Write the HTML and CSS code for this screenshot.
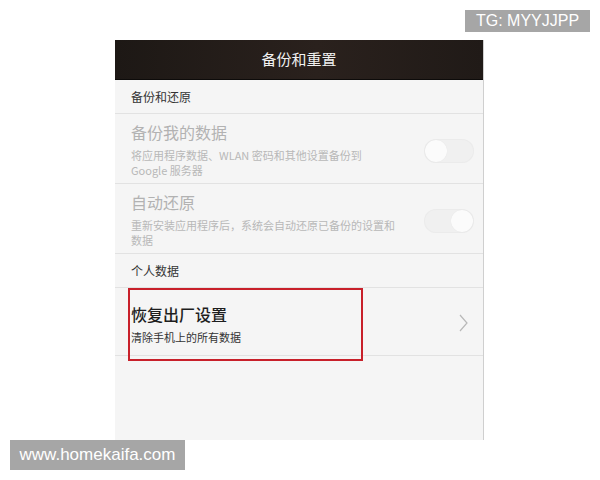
FILE: index.html
```html
<!DOCTYPE html>
<html lang="zh">
<head>
<meta charset="utf-8">
<title>备份和重置</title>
<link rel="stylesheet" href="styles.css">
</head>
<body>
<div class="screen">
  <div class="titlebar">备份和重置</div>
  <div class="content">
    <div class="section-head">备份和还原</div>
    <div class="row disabled">
      <div class="text">
        <div class="title">备份我的数据</div>
        <div class="sub">将应用程序数据、WLAN 密码和其他设置备份到<br>Google 服务器</div>
      </div>
      <div class="toggle"><span class="knob"></span></div>
    </div>
    <div class="row disabled">
      <div class="text">
        <div class="title">自动还原</div>
        <div class="sub">重新安装应用程序后，系统会自动还原已备份的设置和数据</div>
      </div>
      <div class="toggle on"><span class="knob"></span></div>
    </div>
    <div class="section-head">个人数据</div>
    <div class="row link">
      <div class="text">
        <div class="title">恢复出厂设置</div>
        <div class="sub">清除手机上的所有数据</div>
      </div>
      <svg class="chevron" width="9" height="18" viewBox="0 0 9 18"><path d="M1 1 L8 9 L1 17" fill="none" stroke="#b8b8b8" stroke-width="1.2"/></svg>
    </div>
  </div>
  <div class="highlight"></div>
</div>
<div class="wm wm-top">TG: MYYJJPP</div>
<div class="wm wm-bottom">www.homekaifa.com</div>
</body>
</html>
```
FILE: styles.css
```css
html, body {
  margin: 0;
  padding: 0;
  background: #ffffff;
}
body {
  width: 600px;
  height: 480px;
  padding-top: 40px;
  box-sizing: border-box;
  font-family: "Noto Sans CJK SC", "Noto Sans", sans-serif;
  position: relative;
  overflow: hidden;
}
.screen {
  position: relative;
  margin-left: 115px;
  width: 369px;
  height: 400px;
  background: #f5f5f5;
  border-right: 1px solid #cfcfcf;
  box-sizing: border-box;
  display: flex;
  flex-direction: column;
}
.titlebar {
  height: 40px;
  flex: none;
  background: linear-gradient(to right, #1d1815, #2a211d 55%, #201a17);
  border-bottom: 1px solid #0d0b0a;
  box-sizing: border-box;
  color: #f2f2f2;
  font-size: 15px;
  display: flex;
  align-items: center;
  justify-content: center;
  padding-bottom: 2px;
}
.content {
  flex: 1;
  display: flex;
  flex-direction: column;
}
.section-head {
  height: 34px;
  box-sizing: border-box;
  padding-left: 16px;
  display: flex;
  align-items: center;
  font-size: 12px;
  color: #333333;
  border-bottom: 1px solid #e2e2e2;
}
.row {
  display: flex;
  align-items: center;
  padding: 6px 9px 5px 16px;
  border-bottom: 1px solid #e2e2e2;
}
.row .text {
  flex: 1;
}
.row .title {
  font-size: 16px;
  line-height: 24px;
}
.row .sub {
  font-size: 11px;
  line-height: 15px;
  margin-top: 4px;
  width: 270px;
}
.row.disabled .title {
  color: #b2b2b2;
}
.row.disabled .sub {
  color: #b8b8b8;
}
.row.link {
  padding: 14px 15px 10px 16px;
}
.row.link .title {
  color: #1e1e1e;
  font-weight: 500;
}
.row.link .sub {
  color: #333333;
  margin-top: 3px;
  line-height: 16px;
}
.chevron {
  flex: none;
  margin-bottom: 2px;
}
.toggle {
  flex: none;
  width: 50px;
  height: 24px;
  border-radius: 12px;
  background: #f0f0f0;
  box-shadow: inset 0 0 0 1px #ebebeb;
  position: relative;
  margin-top: 4px;
}
.knob {
  position: absolute;
  top: 1px;
  left: 1px;
  width: 22px;
  height: 22px;
  border-radius: 50%;
  background: #fbfbfb;
  box-shadow: 0 0 1px rgba(0,0,0,0.08);
}
.toggle.on .knob {
  left: 27px;
}
.highlight {
  position: absolute;
  left: 13px;
  top: 248px;
  width: 235px;
  height: 73px;
  border: 2px solid #c8202a;
  box-sizing: border-box;
}
.wm {
  position: absolute;
  background: #a6a6a6;
  color: #ffffff;
  font-family: "Liberation Sans", Arial, sans-serif;
  display: flex;
  align-items: center;
  justify-content: center;
}
.wm-top {
  left: 465px;
  top: 10px;
  width: 125px;
  height: 22px;
  font-size: 16px;
}
.wm-bottom {
  left: 10px;
  top: 440px;
  width: 175px;
  height: 30px;
  font-size: 17px;
}
```
